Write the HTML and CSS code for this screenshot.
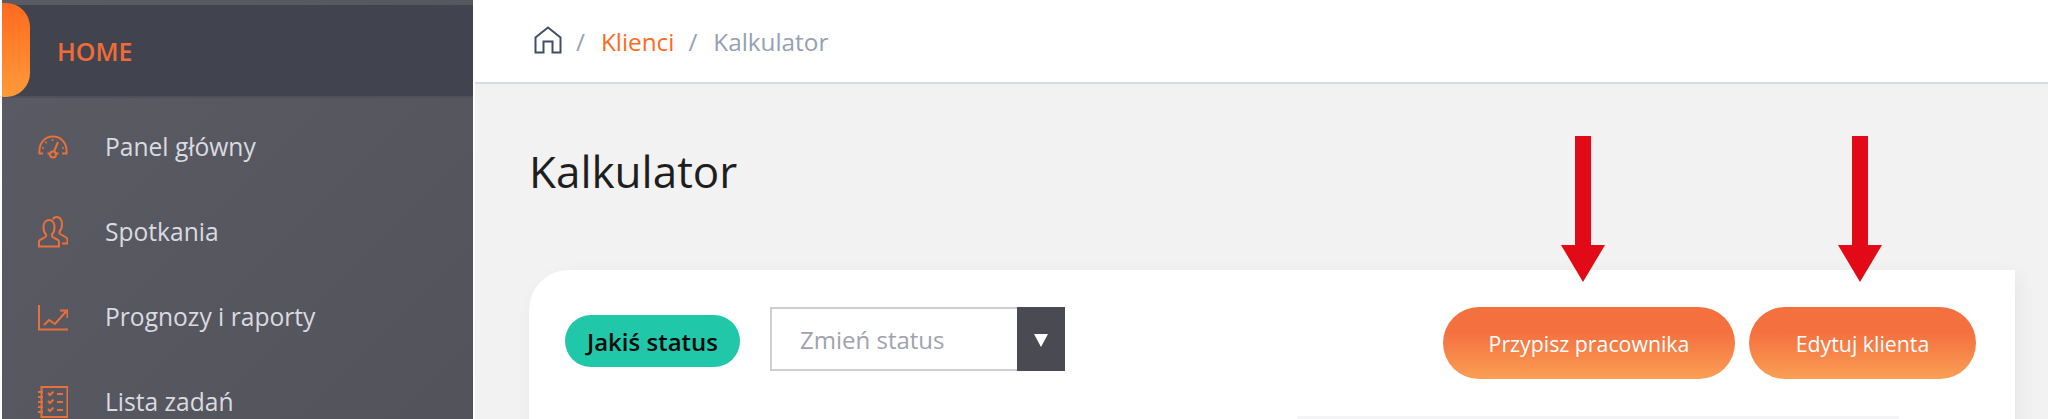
FILE: index.html
```html
<!doctype html>
<html lang="pl">
	<head>
		<title>Kalkulator</title>
		<meta charset="UTF-8">
		<link rel="stylesheet" href="styles.css">
	</head>

	<body>
		<div class="wrapper">

			<aside class="sidebar">
				<div class="home-row">
					<span class="home-mark"></span>
					<span class="home-label">HOME</span>
				</div>

				<a class="nav-item">
					<svg class="nav-icon" viewBox="0 0 30 32">
						<path d="M5 22.500H1.500C0.500 12 7 5.500 15 5.500S29.500 12 28.500 22.500H24"/>
						<path d="M9.500 22.500H12M18 22.500H20.500"/>
						<circle cx="15" cy="23.500" r="3"/>
						<path d="M16 20.500L20 11"/>
						<path class="dots" d="M5 17v.1M8 11.500v.1M14.500 9v.1M25 17v.1"/>
					</svg>
					<span>Panel główny</span>
				</a>
				<a class="nav-item">
					<svg class="nav-icon" viewBox="0 0 30 32">
						<path d="M1 30.500V25.500C1 23 6.500 22.500 8 20.500V18.500C6.500 17 5.500 14.500 5.500 11C5.500 6.500 8 4 11 4S16.500 6.500 16.500 11C16.500 14.500 15.500 17 14 18.500V20.500C15.500 22.500 21 23 21 25.500V30.500Z"/>
						<path d="M15 3.500C15.500 2 17 1 18.500 1C22 1 24 4 24 8.500C24 12 23 14 21.500 15.500V17.500C23 19.500 29.500 20.500 29.500 23.500V27.500H24"/>
					</svg>
					<span>Spotkania</span>
				</a>
				<a class="nav-item">
					<svg class="nav-icon" viewBox="0 0 30 32">
						<path d="M1 4V28.500H30"/>
						<path d="M6 24L11 19L17 23L28.500 10"/>
						<path d="M22 9.500H29.500V17"/>
					</svg>
					<span>Prognozy i raporty</span>
				</a>
				<a class="nav-item">
					<svg class="nav-icon" viewBox="0 0 30 32">
						<path d="M3.500 1H29.500V31H3.500Z"/>
						<path d="M0 6H5M0 11H5M0 16H5M0 21H5M0 26H5"/>
						<path d="M10 7L12 9L15.500 5.500M10 15L12 17L15.500 13.500M10 23L12 25L15.500 21.500"/>
						<path d="M19 8H25M19 16H25M19 24H25"/>
					</svg>
					<span>Lista zadań</span>
				</a>
			</aside>

			<div class="content">
				<header class="topbar">
					<svg class="crumb-home" viewBox="0 0 28 28">
						<path d="M1.500 26.500V11.500L14 1.500L26.500 11.500V26.500H18.500V15.500H9.500V26.500Z"/>
					</svg>
					<span class="crumb-sep">/</span>
					<a class="crumb-link">Klienci</a>
					<span class="crumb-sep">/</span>
					<span class="crumb-current">Kalkulator</span>
				</header>

				<main class="main">
					<h1>Kalkulator</h1>

					<section class="card">
						<div class="card-top">
							<span class="status">Jakiś status</span>
							<div class="status-select">
								<span class="status-select-text">Zmień status</span>
								<span class="status-select-arrow"></span>
							</div>
							<div class="actions">
								<button type="button" class="btn btn-wide">Przypisz pracownika</button>
								<button type="button" class="btn btn-narrow">Edytuj klienta</button>
							</div>
						</div>
						<div class="card-strip"></div>
					</section>
				</main>
			</div>

			<svg class="arrow arrow-one" viewBox="0 0 44 146"><path d="M14 0H30V109H44L22 146L0 109H14Z"/></svg>
			<svg class="arrow arrow-two" viewBox="0 0 44 146"><path d="M14 0H30V109H44L22 146L0 109H14Z"/></svg>
		</div>
	</body>
</html>
```

FILE: styles.css
```css
* {
	padding: 0;
	margin: 0;
	box-sizing: border-box;
	font-family: "Open Sans", "Noto Sans", sans-serif;
}

html, body {
	height: 100%;
	overflow: hidden;
	background: #fff;
}

.wrapper {
	position: relative;
	display: flex;
	height: 419px;
	overflow: hidden;
}


/* sidebar */
.sidebar {
	flex: none;
	width: 471px;
	margin-left: 2px;
	padding-top: 5px;
	background: linear-gradient(135deg, #5b5b65, #53535c);
}

.home-row {
	display: flex;
	align-items: center;
	position: relative;
	height: 93px;
	background: #41444f;
	border-bottom: 2px solid #4e505a;
}

.home-mark {
	width: 28px;
	height: 94px;
	margin-top: -1px;
	border-radius: 0 24px 24px 0;
	background: linear-gradient(180deg, #ff6a1f, #ff9a3a);
}

.home-label {
	margin-left: 27px;
	color: #f26b36;
	font-size: 25px;
	font-weight: 600;
}

.nav-item {
	display: flex;
	align-items: center;
	gap: 37px;
	height: 85px;
	padding-left: 36px;
	color: #d9dbe0;
	font-size: 24.600px;
}

.nav-item:first-of-type {
	margin-top: 6px;
}

.nav-icon {
	flex: none;
	width: 30px;
	height: 32px;
	fill: none;
	stroke: #ea703a;
	stroke-width: 2;
}

.nav-icon .dots {
	stroke-width: 2;
	stroke-linecap: round;
}


/* top bar */
.content {
	flex: 1;
	display: flex;
	flex-direction: column;
	margin-left: 2px;
	min-width: 0;
}

.topbar {
	flex: none;
	display: flex;
	align-items: center;
	height: 84px;
	padding-left: 59px;
	background: #fff;
	border-bottom: 2px solid #d8dbe1;
	font-size: 24.300px;
}

.crumb-home {
	width: 28px;
	height: 28px;
	margin-top: -2px;
	fill: none;
	stroke: #3f4f68;
	stroke-width: 2;
}

.crumb-sep {
	margin: 0 16px 0 14px;
	color: #96a0b2;
}

.crumb-link {
	color: #ff6a1f;
}

.crumb-current {
	color: #96a0b2;
}


/* main area */
.main {
	flex: 1;
	padding: 57px 33px 0 54px;
	background: #f2f2f2;
}

h1 {
	height: 129px;
	color: #1e1e1e;
	font-size: 44px;
	font-weight: 500;
	line-height: 60px;
}

.card {
	height: 200px;
	padding: 37px 39px 0 36px;
	background: #fff;
	border-radius: 40px 0 0 0;
	box-shadow: 4px 6px 20px rgba(0, 0, 0, 0.05);
}

.card-top {
	display: flex;
	align-items: center;
	height: 72px;
}

.status {
	display: flex;
	align-items: center;
	justify-content: center;
	width: 175px;
	height: 52px;
	margin-top: -4px;
	border-radius: 26px;
	background: #20c7a9;
	color: #0a0a0a;
	font-size: 24px;
	font-weight: 600;
}

.status-select {
	display: flex;
	align-items: center;
	width: 295px;
	height: 64px;
	margin: -8px 0 0 30px;
	border: 2px solid #cfcfd3;
	border-right: 0;
	background: #fff;
}

.status-select-text {
	flex: 1;
	padding-left: 28px;
	color: #a0a3ad;
	font-size: 24px;
}

.status-select-arrow {
	position: relative;
	width: 48px;
	height: 64px;
	background: #4a4a53;
}

.status-select-arrow::after {
	content: "";
	position: absolute;
	left: 17px;
	top: 27px;
	border-left: 7px solid transparent;
	border-right: 7px solid transparent;
	border-top: 13px solid #fff;
}

.actions {
	display: flex;
	gap: 14px;
	margin-left: auto;
}

.btn {
	height: 72px;
	border: 0;
	border-radius: 36px;
	background: linear-gradient(180deg, #f4703f 35%, #fa9f55);
	color: #fff;
	font-size: 21.300px;
}

.btn-wide {
	width: 292px;
}

.btn-narrow {
	width: 227px;
}

.card-strip {
	width: 602px;
	height: 10px;
	margin: 37px 0 0 732px;
	background: #f4f4f6;
}


/* red annotation arrows over the page */
.arrow {
	position: absolute;
	top: 136px;
	width: 44px;
	height: 146px;
	fill: #e20a16;
}

.arrow-one {
	left: 1561px;
}

.arrow-two {
	left: 1838px;
}
```
